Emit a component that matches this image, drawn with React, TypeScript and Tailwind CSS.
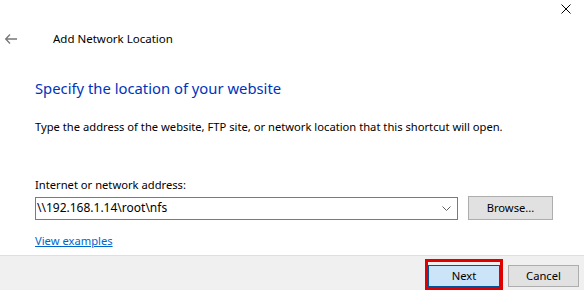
export default function App() {
  const font = { fontFamily: '"Segoe UI", "Noto Sans", sans-serif' }
  return (
    <div className="w-[584px] h-[290px] bg-white flex flex-col text-[11.2px] text-black overflow-hidden" style={font}>
      {/* Title bar */}
      <div className="h-[27px] flex justify-end">
        <button className="w-[34px] h-[20px] flex items-center justify-center">
          <svg width="10" height="10" viewBox="0 0 10 10" className="mr-[2px] mt-[-2px]">
            <path d="M0.5 0.5 L9.5 9.5 M9.5 0.5 L0.5 9.5" stroke="#000" strokeWidth="1" />
          </svg>
        </button>
      </div>

      <div className="h-[22px] flex items-center pt-[2px]">
        <div className="w-[53px] pl-[5px] flex items-center">
          <svg width="12" height="10" viewBox="0 0 12 10">
            <path d="M0.5 5 H12 M5 0.5 L0.7 5 L5 9.5" stroke="#777" strokeWidth="1.3" fill="none" />
          </svg>
        </div>
        <span className="text-[11.5px] leading-none">Add Network Location</span>
      </div>

      <div className="flex-1 px-[35px] flex flex-col">
        <h1 className="mt-[28px] text-[14.8px] leading-[22px] text-[#0033bc]">Specify the location of your website</h1>
        <p className="mt-[20px] leading-[16px]">
          Type the address of the website, FTP site, or network location that this shortcut will open.
        </p>
        <label className="mt-[42px] leading-[16px]">Internet or network address:</label>
        <div className="mt-[3px] flex items-center gap-[10px]">
          <div className="w-[423px] h-[23px] shrink-0 border border-[#7a7a7a] flex items-center pl-[1px] pr-[6px]">
            <span className="flex-1 text-[12px]">\\192.168.1.14\root\nfs</span>
            <svg width="9" height="5" viewBox="0 0 9 5">
              <path d="M0.5 0.5 L4.5 4.5 L8.5 0.5" stroke="#606060" strokeWidth="1" fill="none" />
            </svg>
          </div>
          <button className="w-[85px] h-[24px] shrink-0 bg-[#e1e1e1] border border-[#adadad]">Browse...</button>
        </div>
        <a className="mt-[13px] leading-[16px] text-[#0066cc] underline self-start">View examples</a>
      </div>

      <div className="h-[35px] bg-[#f0f0f0] border-t border-[#dfdfdf] flex items-start justify-end pr-[5px] pt-[3px] gap-[5px]">
        <div className="border-[3px] border-[#e00000] pt-[3px]">
          <button className="w-[72px] h-[22px] bg-[#cce4f7] border border-[#005499]">Next</button>
        </div>
        <button className="mt-[6px] w-[71px] h-[22px] bg-[#e1e1e1] border border-[#adadad]">Cancel</button>
      </div>
    </div>
  )
}
